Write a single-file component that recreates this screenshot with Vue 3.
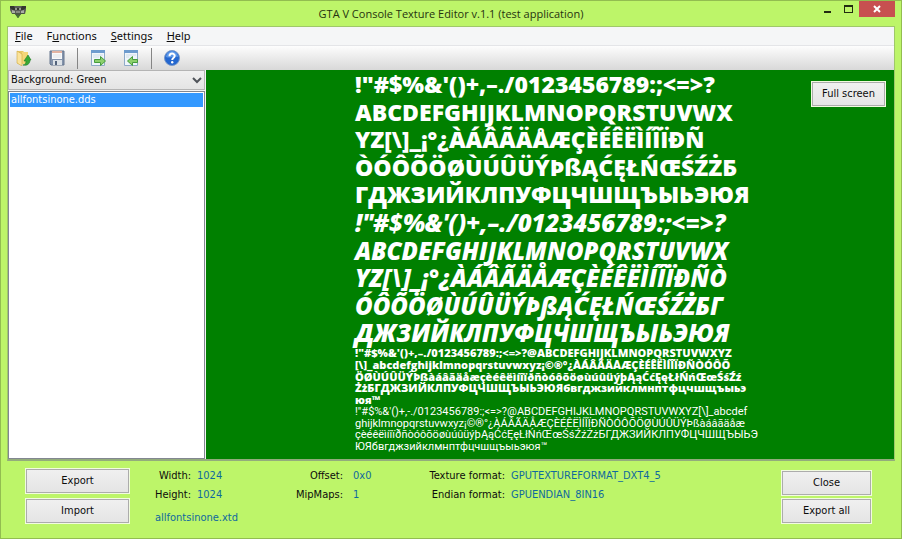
<script setup>
import { ref } from 'vue'

const menus = [
  { key: 'F', before: '', after: 'ile' },
  { key: 'u', before: 'F', after: 'nctions' },
  { key: 'S', before: '', after: 'ettings' },
  { key: 'H', before: '', after: 'elp' }
]

const background = ref('Green')
const files = ['allfontsinone.dds']
const selected = ref(files[0])

const heavy = [
  '!"#$%&\'()+,–./0123456789:;<=>?',
  'ABCDEFGHIJKLMNOPQRSTUVWX',
  'YZ[\\]_¡°¿ÀÁÂÃÄÅÆÇÈÉÊËÌÍÎÏÐÑ',
  'ÒÓÔÕÖØÙÚÛÜÝÞßĄĆĘŁŃŒŚŹŻБ',
  'ГДЖЗИЙКЛПУФЦЧШЩЪЫЬЭЮЯ'
]
const oblique = [
  '!"#$%&\'()+,–./0123456789:;<=>?',
  'ABCDEFGHIJKLMNOPQRSTUVWX',
  'YZ[\\]_¡°¿ÀÁÂÃÄÅÆÇÈÉÊËÌÍÎÏÐÑÒ',
  'ÓÔÕÖØÙÚÛÜÝÞßĄĆĘŁŃŒŚŹŻБГ',
  'ДЖЗИЙКЛПУФЦЧШЩЪЫЬЭЮЯ'
]
const smallBold = [
  '!"#$%&\'()+,–./0123456789:;<=>?@ABCDEFGHIJKLMNOPQRSTUVWXYZ',
  '[\\]_abcdefghijklmnopqrstuvwxyz¡©®°¿ÀÁÂÃÄÅÆÇÈÉÊËÌÍÎÏÐÑÒÓÔÕ',
  'ÖØÙÚÛÜÝÞßàáâãäåæçèéêëìíîïðñòóôõöøùúûüýþĄąĆćĘęŁłŃńŒœŚśŹź',
  'ŻżБГДЖЗИЙКЛПУФЦЧШЩЪЫЬЭЮЯбвгджзийклмнптфцчшщъыьэ',
  'юя™'
]
const smallRegular = [
  '!"#$%&\'()+,-./0123456789:;<=>?@ABCDEFGHIJKLMNOPQRSTUVWXYZ[\\]_abcdef',
  'ghijklmnopqrstuvwxyz¡©®°¿ÀÁÂÃÄÅÆÇÈÉÊËÌÍÎÏÐÑÒÓÔÕÖØÙÚÛÜÝÞßàáâãäåæ',
  'çèéêëìíîïðñòóôõöøùúûüýþĄąĆćĘęŁłŃńŒœŚśŹźŻżБГДЖЗИЙКЛПУФЦЧШЩЪЫЬЭ',
  'ЮЯбвгджзийклмнптфцчшщъыьэюя™'
]
</script>

<template>
  <div class="window">
    <header class="titlebar">
      <svg class="app-icon" width="18" height="14" viewBox="0 0 18 14" aria-hidden="true">
        <path d="M1 1h16v4l-1 4h-4l-3 4-3-4H3L1 5z" fill="#5a5c58" />
        <path d="M1 1h4l1 2h6l1-2h4v2l-3 2H4L1 3z" fill="#34362f" />
        <path d="M3 5l3 1v2H3zM15 5l-3 1v2h3z" fill="#a9ada4" />
        <path d="M6 3h2v2H6zM10 3h2v2h-2z" fill="#94988f" />
        <path d="M7 6h4v2H7z" fill="#85897f" />
        <path d="M3 8h12v1h-3l-3 4-3-4H3z" fill="#4b5745" />
        <path d="M7 10h4l-2 3z" fill="#44752c" />
      </svg>
      <h1>GTA V Console Texture Editor v.1.1 (test application)</h1>
      <div class="controls">
        <button type="button" class="ctl" aria-label="Minimize">
          <svg width="8" height="10" viewBox="0 0 8 10"><path d="M0 7h7v2H0z" fill="#222b10" /></svg>
        </button>
        <button type="button" class="ctl" aria-label="Maximize">
          <svg width="9" height="8" viewBox="0 0 9 8"><path d="M0 0h9v8H0zM1 2v5h7V2z" fill="#222b10" fill-rule="evenodd" /></svg>
        </button>
        <button type="button" class="ctl ctl-close" aria-label="Close window">
          <svg width="8" height="8" viewBox="0 0 8 8"><path d="M1 1l6 6M7 1L1 7" stroke="#fff" stroke-width="2" /></svg>
        </button>
      </div>
    </header>

    <main class="client">
      <nav class="menubar">
        <button v-for="m in menus" :key="m.key" type="button">{{ m.before }}<u>{{ m.key }}</u>{{ m.after }}</button>
      </nav>

      <div class="toolbar" role="toolbar">
        <button type="button" aria-label="Open">
          <svg width="16" height="16" viewBox="0 0 16 16">
            <path d="M1 1h6l1 1h4v12H2l-1-1z" fill="#e8c765" />
            <path d="M6 2h6v12H6z" fill="#f5d678" />
            <path d="M1 1l5 3v12l-5-3z" fill="#fbe39a" stroke="#cfa83e" stroke-width="0.6" />
            <path d="M7 15c2 0 3-2 3-4H8l4-6 3 5h-1c0 4-3 6-7 5z" fill="#39a834" stroke="#1f7d22" stroke-width="0.6" />
          </svg>
        </button>
        <button type="button" aria-label="Save">
          <svg width="16" height="16" viewBox="0 0 16 16">
            <path d="M1 1h14v14H2l-1-1z" fill="#8393ab" stroke="#66778f" />
            <path d="M3 1h10v8H3z" fill="#f8f9fa" />
            <path d="M3 1h10v2H3z" fill="#e2b3a2" />
            <path d="M4 5h8M4 7h8" stroke="#e0e4e8" />
            <path d="M4 10h9v5H4z" fill="#dce1e6" />
            <path d="M6 11h2v4H6z" fill="#53637b" />
          </svg>
        </button>
        <span class="divider"></span>
        <button type="button" aria-label="Export texture">
          <svg width="16" height="16" viewBox="0 0 16 16">
            <path d="M1.500 .5h13v15h-13z" fill="#eff5fb" stroke="#8faac8" />
            <path d="M1 0h14v3H1z" fill="#6d9bce" />
            <path d="M3 5h10M3 7h6" stroke="#cfddea" />
            <path d="M4.500 9.500h6v-3l5 4.500-5 4.500v-3h-6z" fill="#8cd06c" stroke="#469c3e" />
          </svg>
        </button>
        <button type="button" aria-label="Import texture">
          <svg width="16" height="16" viewBox="0 0 16 16">
            <path d="M1.500 .5h13v15h-13z" fill="#eff5fb" stroke="#8faac8" />
            <path d="M1 0h14v3H1z" fill="#6d9bce" />
            <path d="M3 5h10M3 7h3" stroke="#cfddea" />
            <path d="M14.500 9.500h-5v-3L4.500 11l5 4.500v-3h5z" fill="#8cd06c" stroke="#469c3e" />
          </svg>
        </button>
        <span class="divider"></span>
        <button type="button" aria-label="Help">
          <svg width="16" height="16" viewBox="0 0 16 16">
            <circle cx="8" cy="8" r="7.500" fill="#2467cf" stroke="#7798c9" />
            <path d="M2 7a6 6 0 0 1 12 0c-4-2-8 2-12 0z" fill="#5c97e8" />
            <path d="M5.500 6.200C5.500 2.700 10.700 2.900 10.700 5.900 10.700 7.700 8.200 7.800 8.200 10" fill="none" stroke="#fff" stroke-width="2" />
            <circle cx="8.200" cy="12.300" r="1.200" fill="#fff" />
          </svg>
        </button>
      </div>

      <div class="workspace">
        <aside class="side">
          <div class="combo">
            <select v-model="background" aria-label="Background colour">
              <option value="Green">Background: Green</option>
            </select>
            <svg class="chevron" width="10" height="7" viewBox="0 0 10 7" aria-hidden="true">
              <path d="M1 1l4 4 4-4" fill="none" stroke="#50545a" stroke-width="2" />
            </svg>
          </div>
          <ul class="files" role="listbox" aria-label="Textures">
            <li v-for="f in files" :key="f" role="option" :aria-selected="f === selected" :class="{ active: f === selected }" @click="selected = f">{{ f }}</li>
          </ul>
        </aside>

        <section class="preview">
          <div class="sheet">
            <div class="large">
              <p v-for="line in heavy" :key="line">{{ line }}</p>
              <p v-for="line in oblique" :key="'o' + line" class="oblique">{{ line }}</p>
            </div>
            <div class="small">
              <p v-for="line in smallBold" :key="line" class="bold">{{ line }}</p>
              <p v-for="line in smallRegular" :key="'r' + line">{{ line }}</p>
            </div>
          </div>
          <button type="button" class="btn full">Full screen</button>
        </section>
      </div>
    </main>

    <footer class="footer">
      <div class="actions left">
        <button type="button" class="btn">Export</button>
        <button type="button" class="btn">Import</button>
      </div>
      <div class="info">
        <dl>
          <dt>Width:</dt><dd>1024</dd>
          <dt>Offset:</dt><dd class="mid">0x0</dd>
          <dt>Texture format:</dt><dd>GPUTEXTUREFORMAT_DXT4_5</dd>
          <dt>Height:</dt><dd>1024</dd>
          <dt>MipMaps:</dt><dd class="mid">1</dd>
          <dt>Endian format:</dt><dd>GPUENDIAN_8IN16</dd>
        </dl>
        <p class="source">allfontsinone.xtd</p>
      </div>
      <div class="actions right">
        <button type="button" class="btn">Close</button>
        <button type="button" class="btn">Export all</button>
      </div>
    </footer>
  </div>
</template>

<style>
body { margin: 0; }
</style>

<style scoped>
* { box-sizing: border-box; }
h1, p, ul, dl, dd { margin: 0; padding: 0; }
button, select { font: inherit; color: inherit; }

.window {
  min-height: 100vh;
  display: flex;
  flex-direction: column;
  padding: 0 6px;
  border: 1px solid #92bd50;
  background: #bdf569;
  color: #0c0c0c;
  font: 11px/14px "DejaVu Sans Condensed", "DejaVu Sans", sans-serif;
}

.titlebar {
  display: grid;
  grid-template-columns: 1fr auto 1fr;
  align-items: start;
  height: 25px;
}
.app-icon { margin: 4px 0 0 2px; }
.titlebar h1 {
  padding-top: 5px;
  font: 11px/16px "Open Sans", sans-serif;
  color: #26330f;
}
.controls { display: flex; justify-content: flex-end; }
.ctl {
  display: flex;
  align-items: center;
  justify-content: center;
  width: 21px;
  height: 16px;
  padding: 0;
  border: 0;
  background: none;
}
.ctl-close { width: 36px; background: #c75050; }

.client {
  flex: 1;
  display: flex;
  flex-direction: column;
  border: 1px solid #9fc86a;
  border-bottom: 2px solid #93ac7c;
}
.menubar {
  display: flex;
  gap: 14px;
  height: 19px;
  padding: 0 7px;
  background: #f5f6f7;
  border-bottom: 1px solid #e4e5e8;
}
.menubar button {
  padding: 0;
  border: 0;
  background: none;
  font: 11px/18px "Noto Sans", sans-serif;
}
.toolbar {
  display: flex;
  align-items: center;
  height: 24px;
  padding: 0 8px;
  gap: 17px;
  background: linear-gradient(#fdfdfd, #d8d8d8);
}
.toolbar button { display: flex; padding: 0; border: 0; background: none; }
.divider { width: 1px; height: 21px; margin: 0 -5px; background: #858585; }

.workspace { flex: 1; display: flex; }
.side {
  width: 198px;
  display: flex;
  flex-direction: column;
  gap: 1px;
  background: #f4f4f4;
  padding-right: 1px;
}
.combo { position: relative; display: flex; }
.combo select {
  flex: 1;
  height: 20px;
  padding: 0 2px;
  appearance: none;
  border: 1px solid #b4b4b4;
  border-radius: 0;
  background: linear-gradient(#f0f0f0, #e4e4e4);
}
.chevron { position: absolute; right: 3px; top: 7px; pointer-events: none; }
.files {
  flex: 1;
  list-style: none;
  padding: 1px;
  border: 1px solid #828790;
  background: #fff;
}
.files li { padding: 0 1px; line-height: 14px; }
.files .active { background: #3399ff; color: #fff; }

.preview {
  position: relative;
  flex: 1;
  display: flex;
  justify-content: center;
  background: #008000;
}
.sheet {
  width: 390px;
  color: #fff;
  white-space: pre;
  font-family: "Open Sans", "Noto Sans", sans-serif;
}
.large {
  display: grid;
  grid-template-rows: repeat(10, 1fr);
  height: 277px;
  padding-top: 1px;
  font-size: 23px;
  font-weight: 800;
  line-height: 27px;
}
.oblique { font-size: 24px; font-style: italic; }
.small {
  display: grid;
  grid-template-rows: repeat(9, 1fr);
  height: 106px;
  font-family: Roboto, "Noto Sans", sans-serif;
  font-size: 11px;
  line-height: 11px;
}
.bold { font-family: "Open Sans", "Noto Sans", sans-serif; font-weight: 800; }

.btn {
  height: 24px;
  padding: 0;
  border: 1px solid #acacac;
  outline: 1px solid #f2fce0;
  background: linear-gradient(#f0f0f0, #e5e5e5);
  text-align: center;
}
.full { position: absolute; top: 12px; right: 9px; width: 73px; }

.footer { display: flex; padding: 8px 24px 13px 19px; }
.actions { display: flex; flex-direction: column; }
.left { width: 103px; gap: 6px; }
.right { width: 89px; padding-top: 2px; gap: 4px; }
.info { flex: 1; padding: 0 26px; }
dl {
  display: grid;
  grid-template-columns: 36px 94px 46px 71px 79px auto;
  column-gap: 6px;
  line-height: 19px;
  margin-top: -3px;
  white-space: nowrap;
}
dt { justify-self: end; }
dd, .source { color: #10699e; }
.mid { padding-left: 4px; }
.source { margin-top: 7px; }
</style>
